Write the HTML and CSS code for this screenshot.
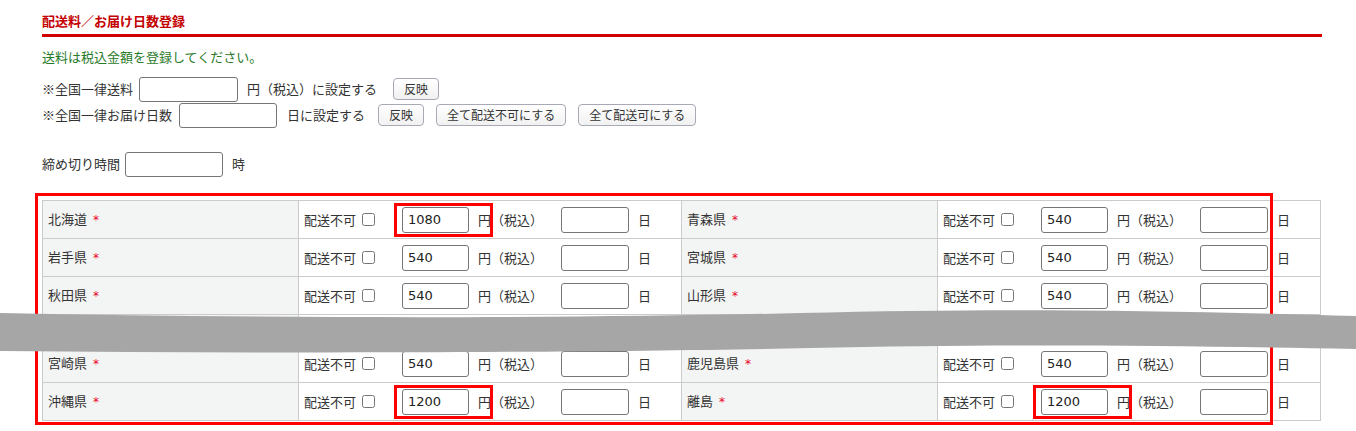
FILE: index.html
```html
<!DOCTYPE html>
<html lang="ja">
<head>
<meta charset="utf-8">
<title>配送料／お届け日数登録</title>
<link rel="stylesheet" href="styles.css">
</head>
<body>
<div class="page">
  <h2 class="title">配送料／お届け日数登録</h2>
  <p class="note">送料は税込金額を登録してください。</p>
  <div class="bulk">
    <div class="row">
      <span>※全国一律送料</span>
      <input type="text" class="txt w99 m6">
      <span class="m9">円（税込）に設定する</span>
      <button class="btn m16">反映</button>
    </div>
    <div class="row">
      <span>※全国一律お届け日数</span>
      <input type="text" class="txt w98 m7">
      <span class="m10">日に設定する</span>
      <button class="btn m13">反映</button>
      <button class="btn m12">全て配送不可にする</button>
      <button class="btn m12">全て配送可にする</button>
    </div>
  </div>
  <div class="row deadline">
    <span>締め切り時間</span>
    <input type="text" class="txt w98 m5">
    <span class="m9">時</span>
  </div>

  <div class="wrap">
    <table class="fees">
      <colgroup><col class="c-lbl"><col class="c-val"><col class="c-lbl"><col class="c-val"></colgroup>
      <tr>
        <td class="lbl">北海道<span class="req">*</span></td>
        <td><div class="val"><span>配送不可</span><input type="checkbox" class="chk"><span class="fee hl"><input type="text" class="txt num" value="1080"><span class="yen">円</span></span><span>（税込）</span><input type="text" class="txt days"><span class="day">日</span></div></td>
        <td class="lbl">青森県<span class="req">*</span></td>
        <td><div class="val"><span>配送不可</span><input type="checkbox" class="chk"><span class="fee"><input type="text" class="txt num" value="540"><span class="yen">円</span></span><span>（税込）</span><input type="text" class="txt days"><span class="day">日</span></div></td>
      </tr>
      <tr>
        <td class="lbl">岩手県<span class="req">*</span></td>
        <td><div class="val"><span>配送不可</span><input type="checkbox" class="chk"><span class="fee"><input type="text" class="txt num" value="540"><span class="yen">円</span></span><span>（税込）</span><input type="text" class="txt days"><span class="day">日</span></div></td>
        <td class="lbl">宮城県<span class="req">*</span></td>
        <td><div class="val"><span>配送不可</span><input type="checkbox" class="chk"><span class="fee"><input type="text" class="txt num" value="540"><span class="yen">円</span></span><span>（税込）</span><input type="text" class="txt days"><span class="day">日</span></div></td>
      </tr>
      <tr>
        <td class="lbl">秋田県<span class="req">*</span></td>
        <td><div class="val"><span>配送不可</span><input type="checkbox" class="chk"><span class="fee"><input type="text" class="txt num" value="540"><span class="yen">円</span></span><span>（税込）</span><input type="text" class="txt days"><span class="day">日</span></div></td>
        <td class="lbl">山形県<span class="req">*</span></td>
        <td><div class="val"><span>配送不可</span><input type="checkbox" class="chk"><span class="fee"><input type="text" class="txt num" value="540"><span class="yen">円</span></span><span>（税込）</span><input type="text" class="txt days"><span class="day">日</span></div></td>
      </tr>
      <tr class="cut">
        <td class="lbl"></td><td></td><td class="lbl"></td><td></td>
      </tr>
      <tr>
        <td class="lbl">宮崎県<span class="req">*</span></td>
        <td><div class="val"><span>配送不可</span><input type="checkbox" class="chk"><span class="fee"><input type="text" class="txt num" value="540"><span class="yen">円</span></span><span>（税込）</span><input type="text" class="txt days"><span class="day">日</span></div></td>
        <td class="lbl">鹿児島県<span class="req">*</span></td>
        <td><div class="val"><span>配送不可</span><input type="checkbox" class="chk"><span class="fee"><input type="text" class="txt num" value="540"><span class="yen">円</span></span><span>（税込）</span><input type="text" class="txt days"><span class="day">日</span></div></td>
      </tr>
      <tr>
        <td class="lbl">沖縄県<span class="req">*</span></td>
        <td><div class="val"><span>配送不可</span><input type="checkbox" class="chk"><span class="fee hl"><input type="text" class="txt num" value="1200"><span class="yen">円</span></span><span>（税込）</span><input type="text" class="txt days"><span class="day">日</span></div></td>
        <td class="lbl">離島<span class="req">*</span></td>
        <td><div class="val"><span>配送不可</span><input type="checkbox" class="chk"><span class="fee hl"><input type="text" class="txt num" value="1200"><span class="yen">円</span></span><span>（税込）</span><input type="text" class="txt days"><span class="day">日</span></div></td>
      </tr>
    </table>
    <div class="frame"></div>
  </div>
</div>
<svg class="tear" viewBox="0 0 1356 60" preserveAspectRatio="none" aria-hidden="true">
  <path d="M0,13 C300,19 600,18 800,13 S1150,10 1356,16 L1356,49 C1150,45 1000,44 810,48 S300,54 0,51 Z" fill="#a6a6a6"/>
</svg>
</body>
</html>
```

FILE: styles.css
```css
* { box-sizing: border-box; }

html, body { min-height: 431px; }

body {
  margin: 0;
  position: relative;
  font-family: "Noto Sans CJK JP", "Noto Sans", sans-serif;
  font-size: 13px;
  color: #333;
  background: #fff;
  text-spacing-trim: space-all;
}

.page {
  padding: 0 34px 0 42px;
}

.title {
  margin: 0;
  padding: 11px 0 3px;
  font-size: 13px;
  line-height: 20px;
  font-weight: bold;
  color: #c40000;
  border-bottom: 3px solid #d00000;
}

.note {
  margin: 10px 0 0;
  line-height: 20px;
  color: #2a7a2a;
}

.bulk { margin-top: 9px; }

.row {
  display: flex;
  align-items: center;
  height: 26px;
  line-height: 20px;
  white-space: nowrap;
}

.deadline { margin-top: 23px; }

.txt {
  height: 25px;
  border: 1px solid #767676;
  border-radius: 3px;
  padding: 0 5px;
  font: 13px "DejaVu Sans", sans-serif;
  color: #222;
  background: #fff;
  margin: 0;
}

.w99 { width: 99px; }
.w98 { width: 98px; }

.m5 { margin-left: 5px; }
.m6 { margin-left: 6px; }
.m7 { margin-left: 7px; }
.m9 { margin-left: 9px; }
.m10 { margin-left: 10px; }
.m12 { margin-left: 12px; }
.m13 { margin-left: 13px; }
.m16 { margin-left: 16px; }

.btn {
  height: 22px;
  padding: 0 10px;
  margin-top: 0;
  margin-bottom: 0;
  border: 1px solid #a9a9b6;
  border-radius: 4px;
  background: linear-gradient(#ffffff, #f1f1f1);
  font: 12px/20px "Noto Sans CJK JP", sans-serif;
  color: #333;
}

.wrap {
  position: relative;
  margin-top: 23px;
  width: 1279px;
}

.fees {
  width: 1279px;
  border-collapse: separate;
  border-spacing: 0;
  table-layout: fixed;
  border-top: 1px solid #cbcbcb;
  border-left: 1px solid #cbcbcb;
}

.c-lbl { width: 256px; }
.c-val { width: 383px; }

.fees td {
  border: 0;
  border-right: 1px solid #cbcbcb;
  border-bottom: 1px solid #cbcbcb;
  height: 38px;
  padding: 0 5px;
  vertical-align: middle;
  line-height: 20px;
  white-space: nowrap;
}

.fees tr.cut td { height: 30px; }

.fees .lbl { background: #f3f4f4; }

.req {
  margin-left: 6px;
  color: #e8001c;
  font-family: "DejaVu Sans", sans-serif;
  font-size: 12px;
}

.val {
  display: flex;
  align-items: center;
}

.chk {
  margin: 0 0 0 6px;
  width: 13px;
  height: 13px;
}

.fee {
  position: relative;
  display: flex;
  align-items: center;
  margin-left: 27px;
}

.num { width: 67px; height: 26px; }
.yen { margin-left: 9px; }
.days { width: 68px; height: 26px; margin-left: 18px; }
.day { margin-left: 9px; }

.hl::after {
  content: "";
  position: absolute;
  left: -8px;
  top: -4px;
  right: -2px;
  bottom: -4px;
  border: 3px solid #f00;
  pointer-events: none;
}

.frame {
  position: absolute;
  left: -7px;
  top: -7px;
  width: 1238px;
  height: 232px;
  border: 3px solid #f00;
  pointer-events: none;
}

.tear {
  position: absolute;
  left: 0;
  top: 300px;
  width: 1356px;
  height: 60px;
}
```
